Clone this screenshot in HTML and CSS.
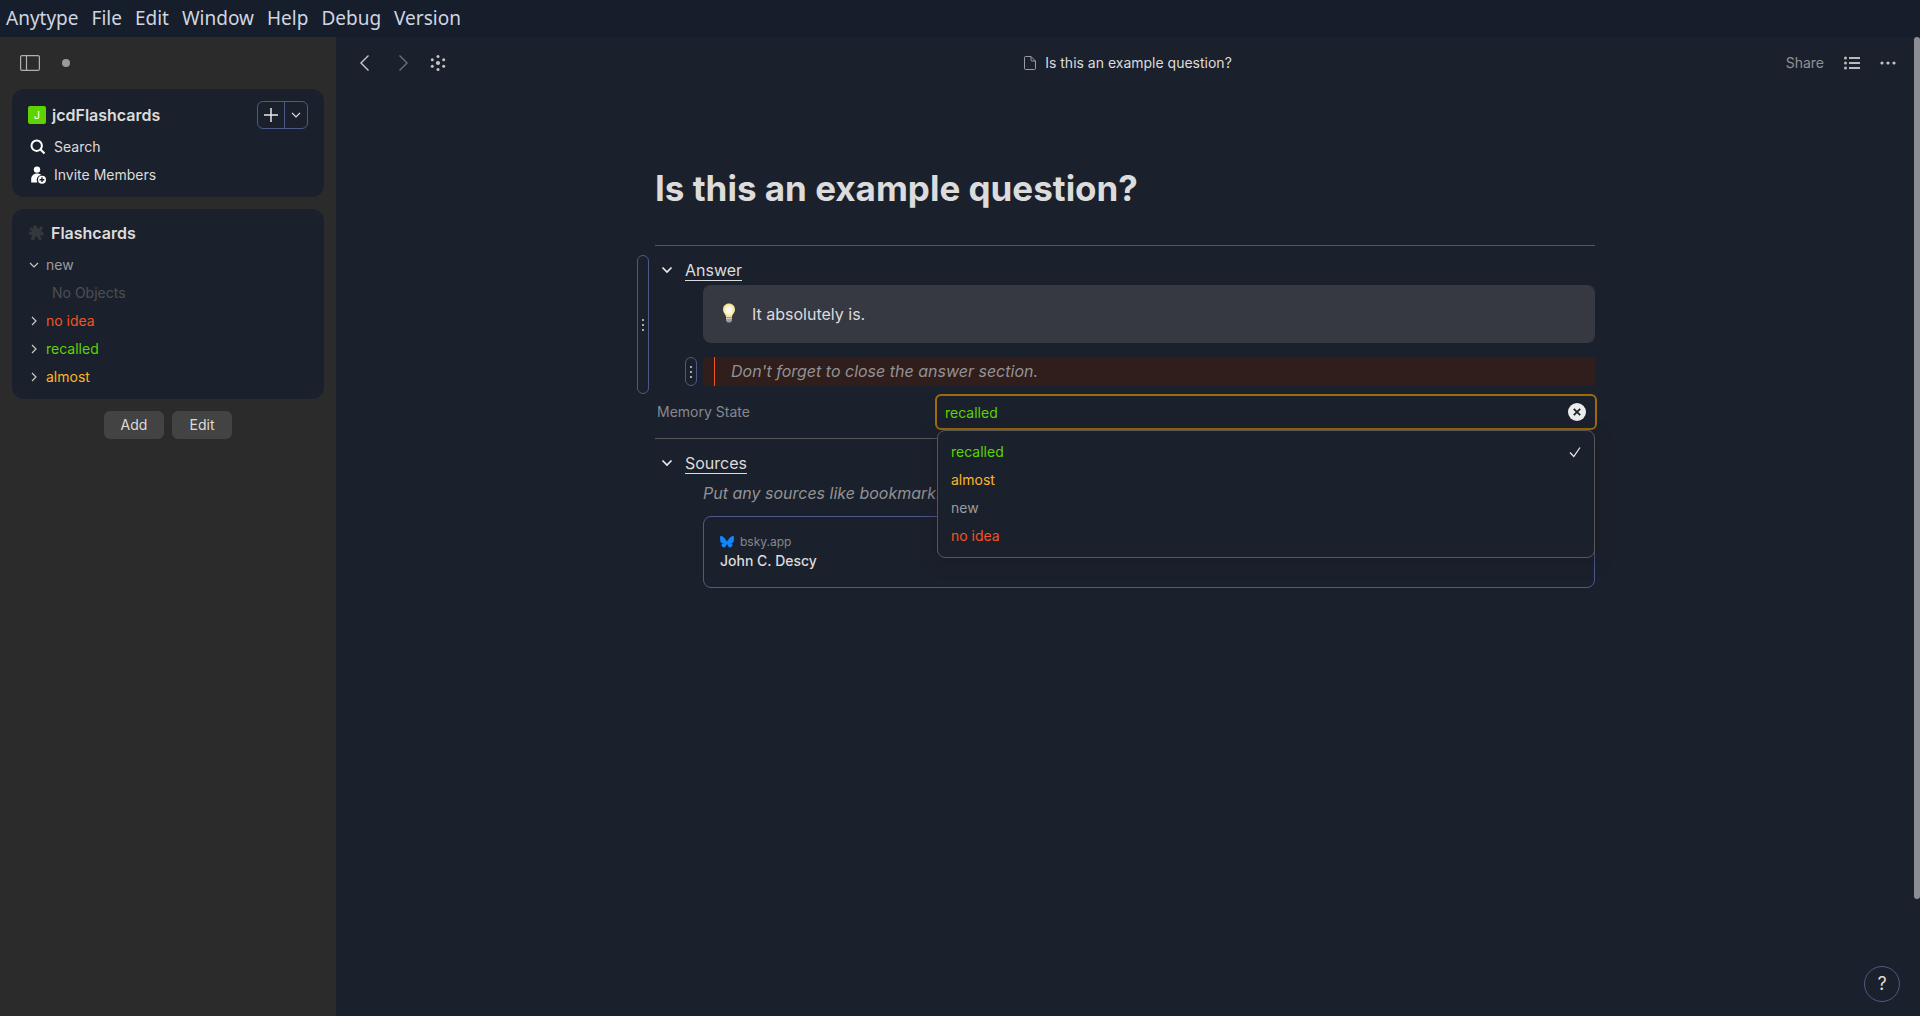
FILE: index.html
```html
<!DOCTYPE html>
<html lang="en">
<head>
<meta charset="utf-8">
<title>Anytype</title>
<link rel="stylesheet" href="styles.css">
</head>
<body>
<nav class="menubar">
  <button>Anytype</button><button>File</button><button>Edit</button><button>Window</button><button>Help</button><button>Debug</button><button>Version</button>
</nav>
<div class="app">
  <aside class="sidebar">
    <div class="side-head">
      <button class="icon-btn" aria-label="Toggle sidebar"><svg width="20" height="16" viewBox="0 0 20 16" fill="none" stroke="#b0b0b0"><rect x=".6" y=".6" width="18.8" height="14.8" rx="1.5" stroke-width="1.2"/><path d="M6.5 1v14" stroke-width="1.2"/></svg></button>
      <span class="sync-dot"></span>
    </div>
    <section class="card">
      <div class="space-row">
        <span class="space-icon">J</span>
        <h2 class="card-title">jcdFlashcards</h2>
        <div class="create">
          <button aria-label="Create object" class="create-plus"><svg width="14" height="14" viewBox="0 0 14 14" stroke="#e6e6e6" stroke-width="1.5"><path d="M7 0v14M0 7h14"/></svg></button>
          <button aria-label="More types" class="create-more"><svg width="10" height="6" viewBox="0 0 10 6" fill="none" stroke="#e6e6e6" stroke-width="1.2"><path d="M1 .8l4 4 4-4"/></svg></button>
        </div>
      </div>
      <a class="side-link" href="#"><svg width="16" height="16" viewBox="0 0 16 16" fill="none" stroke="#fff"><circle cx="6.7" cy="6.7" r="5.2" stroke-width="2"/><path d="M10.5 10.5l4 4" stroke-width="2.2"/></svg>Search</a>
      <a class="side-link" href="#"><svg width="16" height="18" viewBox="0 0 16 18" fill="#fff"><circle cx="7" cy="3.600" r="3.200"/><path d="M1.200 16.400v-3C1.200 10 3.400 7.600 7 7.600c1.800 0 3.200.5 4.200 1.500A4.700 4.700 0 0 0 7.400 16.400z"/><path fill-rule="evenodd" d="M12 9.700a4 4 0 1 1 0 8 4 4 0 0 1 0-8zM11.300 11.300v1.700H9.600v1.400h1.700v1.700h1.400v-1.700h1.700V13h-1.700v-1.700z"/></svg>Invite Members</a>
    </section>
    <section class="card">
      <div class="widget-row">
        <svg width="16" height="16" viewBox="0 0 16 16" fill="#34373c"><path d="M5.200 4.200C4.600 2.400 5.500.600 7.200.600c1.600 0 2.200 1.300 1.700 2.500l1.900.700L13.200.800l2.100 2.700-2 1.500.5 2.100c1.200.300 2 1 1.900 2-.1 1.500-1.700 1.800-2.900 1.200l-.8 1.300 2.200 2-2 1.900-2.500-1.700c.3-1.500-.6-2.500-1.700-2.300-1.100.2-1.500 1.400-.9 2.500l-2.500 1.500-2.200-1.900 1.800-2.500-.7-1.600C2 10.300.7 9.800.7 8.300c0-1.600 1.700-2.100 3-1.500l.5-.9L1.300 4.600 3.300 2z"/></svg>
        <h2 class="card-title">Flashcards</h2>
      </div>
      <button class="group grey" aria-expanded="true"><svg width="10" height="10" viewBox="0 0 10 10"><path d="M1 3l4 4 4-4"/></svg>new</button>
      <div class="empty">No Objects</div>
      <button class="group red"><svg width="10" height="10" viewBox="0 0 10 10"><path d="M3 1l4 4-4 4"/></svg>no idea</button>
      <button class="group lime"><svg width="10" height="10" viewBox="0 0 10 10"><path d="M3 1l4 4-4 4"/></svg>recalled</button>
      <button class="group yellow"><svg width="10" height="10" viewBox="0 0 10 10"><path d="M3 1l4 4-4 4"/></svg>almost</button>
    </section>
    <div class="side-actions"><button>Add</button><button>Edit</button></div>
  </aside>

  <main class="main">
    <header class="header">
      <div class="head-left">
        <button class="icon-btn" aria-label="Back"><svg width="10" height="16" viewBox="0 0 10 16" fill="none" stroke="#c8c8c8" stroke-width="1.400"><path d="M8.500 .6L1 8 8.500 15.400"/></svg></button>
        <button class="icon-btn" aria-label="Forward"><svg width="10" height="16" viewBox="0 0 10 16" fill="none" stroke="#6c7078" stroke-width="1.400"><path d="M1.500 .6L9 8 1.500 15.400"/></svg></button>
        <button class="icon-btn" aria-label="Graph"><svg width="16" height="16" viewBox="0 0 16 16" fill="#c4c4c4"><circle cx="8" cy="8" r="2.100"/><circle cx="8" cy="1.600" r="1.500"/><circle cx="8" cy="14.400" r="1.500"/><circle cx="2.300" cy="4.800" r="1.500"/><circle cx="13.700" cy="4.800" r="1.500"/><circle cx="2.300" cy="11.200" r="1.500"/><circle cx="13.700" cy="11.200" r="1.500"/></svg></button>
      </div>
      <div class="head-title"><svg width="12" height="16" viewBox="0 0 12 16" fill="none" stroke="#9a9b9e"><path d="M2 1.500h5l4.500 4.500v7.500q0 1-1 1H1.500q-1 0-1-1v-11q0-1 1-1zM7 1.500v3.500q0 1 1 1h3.500"/></svg>Is this an example question?</div>
      <div class="head-right">
        <button class="share">Share</button>
        <button class="icon-btn" aria-label="Relations"><svg width="16" height="14" viewBox="0 0 16 14" fill="#b8babc"><path d="M5 1h11v2H5zM5 6h11v2H5zM5 11h11v2H5z"/><circle cx="1.500" cy="2" r="1.500"/><circle cx="1.500" cy="7" r="1.500"/><circle cx="1.500" cy="12" r="1.500"/></svg></button>
        <button class="icon-btn" aria-label="More"><svg width="16" height="4" viewBox="0 0 16 4" fill="#c0c2c4"><circle cx="2" cy="2" r="1.600"/><circle cx="8" cy="2" r="1.600"/><circle cx="14" cy="2" r="1.600"/></svg></button>
      </div>
    </header>

    <article class="doc">
      <h1>Is this an example question?</h1>
      <hr>
      <section class="toggle answer">
        <button class="handle" aria-label="Move block"><i></i></button>
        <div class="toggle-head">
          <button class="icon-btn" aria-label="Collapse"><svg width="12" height="8" viewBox="0 0 12 8" fill="none" stroke="#eee" stroke-width="1.600"><path d="M1.500 1.500L6 6l4.500-4.500"/></svg></button>
          <span class="heading">Answer</span>
        </div>
        <div class="callout">
          <svg width="14" height="20" viewBox="0 0 14 20"><defs><radialGradient id="glow"><stop offset=".35" stop-color="#fffdf0"/><stop offset="1" stop-color="#f5dd86"/></radialGradient></defs><path d="M7 .5c3.500 0 6 2.500 6 5.900 0 3.300-2.700 4.600-3 7.600H4C3.700 11 1 9.700 1 6.400 1 3 3.500.5 7 .5z" fill="url(#glow)"/><path d="M4 14h6v3.500L8.500 19.500h-3L4 17.500z" fill="#9d9d9b"/><path d="M4 15.500h6" stroke="#cfcfca"/></svg>
          <span>It absolutely is.</span>
        </div>
        <div class="quote-row">
          <button class="handle" aria-label="Move block"><i></i></button>
          <blockquote>Don't forget to close the answer section.</blockquote>
        </div>
      </section>

      <div class="relation">
        <label for="memory">Memory State</label>
        <div class="combo">
          <input id="memory" type="text" value="recalled" role="combobox" aria-expanded="true" aria-controls="states">
          <button class="clear" aria-label="Clear"><svg width="18" height="18" viewBox="0 0 18 18"><circle cx="9" cy="9" r="9" fill="#ececec"/><path d="M5.800 5.800l6.400 6.400M12.200 5.800l-6.400 6.400" stroke="#1b202b" stroke-width="1.800"/></svg></button>
          <ul class="options" id="states" role="listbox">
            <li class="lime" role="option" aria-selected="true">recalled<svg width="12" height="12" viewBox="0 0 12 12" fill="none" stroke="#e6e6e6" stroke-width="1.300"><path d="M1 6.500L4.800 10.500 11 1.500"/></svg></li>
            <li class="yellow" role="option">almost</li>
            <li class="grey" role="option">new</li>
            <li class="red" role="option">no idea</li>
          </ul>
        </div>
      </div>
      <hr>

      <section class="toggle">
        <div class="toggle-head">
          <button class="icon-btn" aria-label="Collapse"><svg width="12" height="8" viewBox="0 0 12 8" fill="none" stroke="#eee" stroke-width="1.600"><path d="M1.500 1.500L6 6l4.500-4.500"/></svg></button>
          <span class="heading">Sources</span>
        </div>
        <p class="hint">Put any sources like bookmarks</p>
        <a class="bookmark" href="#">
          <span class="site"><svg width="14" height="12" viewBox="0 0 14 12" fill="#1185fe"><path d="M3 .8C4.600 2 6.400 4.400 7 5.700 7.600 4.400 9.400 2 11 .8c1.200-.9 3-1.500 3 .6 0 .4-.2 3.500-.4 4-.5 1.700-2.100 2.100-3.600 1.900 2.600.4 3.200 1.900 1.800 3.300-2.700 2.700-3.800-.7-4.200-1.600-.4-1.100-.8-1.100-1.200 0-.4.900-1.500 4.300-4.200 1.600C.8 9.200 1.400 7.700 4 7.300c-1.500.2-3.100-.2-3.600-1.900C.2 4.900 0 1.800 0 1.400 0-.7 1.800-.1 3 .8z"/></svg>bsky.app</span>
          <span class="name">John C. Descy</span>
        </a>
      </section>
    </article>
    <div class="scroll-thumb"></div>
    <button class="help">?</button>
  </main>
</div>
</body>
</html>
```
FILE: styles.css
```css
* { box-sizing: border-box; }
body {
  margin: 0;
  height: 100vh;
  display: flex;
  flex-direction: column;
  background: #1b212c;
  color: #dcdcdc;
  font: 14px/22px Inter, "Liberation Sans", sans-serif;
  overflow: hidden;
}
button, input { font: inherit; color: inherit; background: none; border: 0; padding: 0; }
a { color: inherit; text-decoration: none; }
h1, h2, p, ul, blockquote { margin: 0; padding: 0; }
svg { display: block; flex: none; }
.icon-btn { display: flex; align-items: center; justify-content: center; }

.menubar {
  display: flex;
  gap: 13px;
  height: 37px;
  padding: 0 6px;
  background: #161d2b;
  color: #d0d5e0;
  font: 19px/36px "Noto Sans", sans-serif;
}
.menubar button { height: 36px; }
.app { flex: 1; display: flex; min-height: 0; }

.sidebar {
  width: 336px;
  flex: none;
  padding: 0 12px;
  background: #2b2b2b;
  display: flex;
  flex-direction: column;
  gap: 12px;
}
.side-head { display: flex; align-items: center; gap: 22px; height: 52px; padding-left: 8px; margin-bottom: -12px; }
.sync-dot { width: 8px; height: 8px; border-radius: 50%; background: #9a9a9a; }
.card { background: #1b212c; border-radius: 12px; padding: 8px 16px; }
.card-title { font-size: 16px; line-height: 24px; font-weight: 600; }
.space-row { display: flex; align-items: center; gap: 6px; height: 36px; }
.space-icon {
  width: 18px; height: 18px;
  border-radius: 2px;
  background: #5dd400;
  color: #fff;
  font-size: 11px;
  line-height: 18px;
  text-align: center;
}
.create { display: flex; height: 28px; margin-left: auto; border: 1px solid #4a5b88; border-radius: 6px; }
.create button { display: flex; align-items: center; justify-content: center; }
.create-plus { width: 26px; }
.create-more { width: 23px; }
.create .create-more { border-left: 1px solid #4a5b88; }
.side-link { display: flex; align-items: center; gap: 8px; height: 28px; padding-left: 2px; }
.widget-row { display: flex; align-items: center; gap: 7px; height: 32px; margin-bottom: 2px; }
.group { display: flex; align-items: center; gap: 7px; height: 28px; width: 100%; padding-left: 1px; }
.group svg { fill: none; stroke: #c8c8c8; stroke-width: 1.2; }
.empty { height: 28px; line-height: 28px; padding-left: 24px; color: #4c4f54; }
.side-actions { display: flex; justify-content: center; gap: 8px; }
.side-actions button { width: 60px; height: 28px; border-radius: 6px; background: #434343; }

.grey { color: #9a9b9e; }
.red { color: #f05423; }
.lime { color: #5dd400; }
.yellow { color: #ffb522; }

.main { flex: 1; position: relative; min-width: 0; padding-right: 6px; }
.header { display: grid; grid-template-columns: 1fr auto 1fr; align-items: center; height: 52px; padding: 0 18px 0 24px; }
.head-left { display: flex; gap: 28px; }
.head-left .icon-btn:last-child { margin-left: -6px; }
.head-title { display: flex; align-items: center; gap: 9px; }
.head-right { display: flex; justify-content: flex-end; gap: 20px; }
.share { color: #8f9196; }

.doc { width: 940px; max-width: 100%; margin: 0 auto; padding-top: 77px; }
h1 { font-size: 35px; line-height: 44px; font-weight: 700; }
hr { margin: 0; border: 0; height: 1px; background: #56575b; }
h1 + hr { margin-top: 35px; }
.toggle { position: relative; padding: 12px 0 0 48px; }
.answer { margin-bottom: 8px; }
.toggle-head { display: flex; align-items: center; gap: 12px; height: 24px; margin-left: -42px; }
.heading { font-size: 16px; line-height: 20px; border-bottom: 1px solid #dcdcdc; }
.callout {
  display: flex;
  align-items: center;
  gap: 16px;
  height: 58px;
  margin-top: 3px;
  padding: 0 19px;
  border-radius: 8px;
  background: #363842;
  font-size: 16px;
}
.callout svg { margin-bottom: 2px; }
.quote-row { position: relative; margin-top: 14px; }
blockquote {
  padding-left: 11px;
  background: #2f1e1b;
  color: #929294;
  font-size: 16px;
  line-height: 29px;
  font-style: italic;
}
blockquote::before { content: ""; float: left; width: 1px; height: 29px; margin-right: 16px; background: #f05423; }
.handle {
  position: absolute;
  left: -18px; top: 9px; bottom: -8px;
  width: 12px;
  border: 1px solid #4a5b88;
  border-radius: 6px;
}
.quote-row .handle { top: 0; bottom: 0; }
.handle i { display: block; width: 2px; height: 2px; margin: auto; background: #a8a9ab; box-shadow: 0 5px #a8a9ab, 0 -5px #a8a9ab; }

.relation { display: flex; align-items: center; }
.relation label { width: 280px; padding-left: 2px; color: #86888c; }
.combo { position: relative; flex: 1; height: 36px; margin-right: -2px; }
.combo input {
  display: block;
  width: 100%;
  height: 36px;
  padding: 0 40px 0 8px;
  border: 2px solid #9f6a08;
  border-radius: 6px;
  color: #5dd400;
  outline: 0;
}
.clear { position: absolute; right: 11px; top: 9px; }
.options {
  position: absolute;
  z-index: 2;
  top: 100%; left: 2px; right: 2px;
  padding: 7px 13px;
  list-style: none;
  background: #1b212c;
  border: 1px solid #56575b;
  border-radius: 8px;
  box-shadow: 0 4px 16px rgba(26, 20, 30, .5);
}
.options li { display: flex; align-items: center; justify-content: space-between; height: 28px; }
.relation + hr { margin-top: 8px; }
.hint { margin: 6px 0 11px; color: #929294; font-size: 16px; line-height: 24px; font-style: italic; }
.bookmark {
  display: block;
  height: 72px;
  padding: 15px 16px;
  border: 1px solid #4a5b88;
  border-radius: 8px;
}
.site { display: flex; align-items: center; gap: 6px; color: #86888c; font-size: 12px; line-height: 20px; }
.name { display: block; font-weight: 500; line-height: 18px; }

.scroll-thumb { position: absolute; right: 0; top: 0; width: 6px; height: 88%; border-radius: 3px; background: #8d8d96; }
.help {
  position: absolute;
  right: 20px; bottom: 14px;
  width: 36px; height: 36px;
  border: 1px solid #4a5b88;
  border-radius: 50%;
  font-size: 18px;
}
```
